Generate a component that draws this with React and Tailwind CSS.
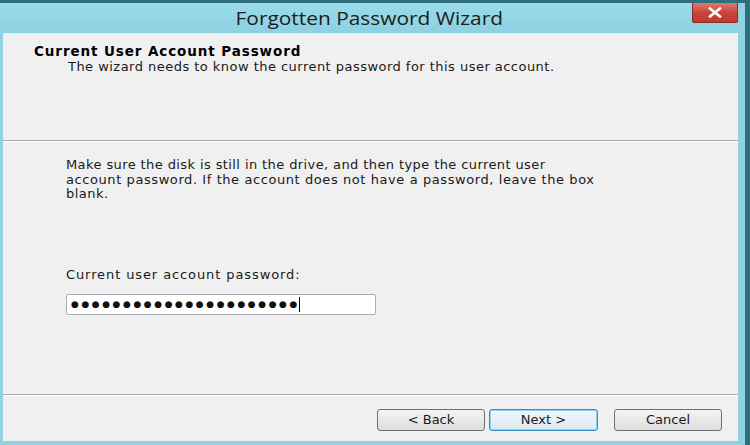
export default function App() {
  const font = { fontFamily: '"DejaVu Sans", Verdana, sans-serif' };
  return (
    <div className="flex h-[445px] w-[750px] flex-col overflow-hidden bg-[#8fd3e3]" style={font}>
      <div className="h-[3px] bg-[#2f6f7b]" />
      <div className="flex flex-1">
        <div className="flex flex-1 flex-col">
          {/* title bar */}
          <div className="relative flex h-[30px] items-center justify-center bg-gradient-to-b from-[#9adbe9] to-[#8cd1e2]">
            <span
              className="inline-block scale-x-[1.16] text-[18px] text-[#1c1c1c]"
              style={{ fontFamily: '"Open Sans", "Noto Sans", sans-serif' }}
            >
              Forgotten Password Wizard
            </span>
            <div className="absolute right-[0px] top-0 flex h-[20px] w-[46px] items-center justify-center rounded-b-[2px] border border-t-0 border-[#8a2b26] bg-gradient-to-b from-[#e07a70] via-[#c9433a] to-[#c23a30]">
              <svg width="14" height="11" viewBox="0 0 14 11">
                <path d="M2 1.5 L12 9.5 M12 1.5 L2 9.5" stroke="#ffffff" strokeWidth="2.6" strokeLinecap="square" />
              </svg>
            </div>
          </div>
          {/* body */}
          <div className="flex flex-1 pl-[3px] pb-[4px]">
            <div className="flex flex-1 flex-col bg-[#f0f0f0]">
              <div className="h-[107px] pl-[31px] pt-[10px]">
                <div className="whitespace-nowrap text-[13.5px] font-bold leading-[16px] tracking-[0.9px] text-black">
                  Current User Account Password
                </div>
                <div className="whitespace-nowrap pl-[34px] text-[13px] leading-[16px] tracking-[0.47px] text-[#1a1a1a]">
                  The wizard needs to know the current password for this user account.
                </div>
              </div>
              <div className="h-[1px] bg-[#a9a9a9]" />
              <div className="h-[1px] bg-white" />
              <div className="flex h-[252px] flex-col pl-[63px] pt-[16px]">
                <div className="whitespace-nowrap text-[13px] leading-[14.5px] text-[#1a1a1a]">
                  <div className="tracking-[0.4px]">Make sure the disk is still in the drive, and then type the current user</div>
                  <div className="tracking-[0.58px]">account password. If the account does not have a password, leave the box</div>
                  <div className="tracking-[0.5px]">blank.</div>
                </div>
                <div className="mt-[65px] whitespace-nowrap text-[13px] leading-[16px] tracking-[0.9px] text-[#1a1a1a]">
                  Current user account password:
                </div>
                <div className="mt-[11px] flex h-[21px] w-[310px] items-center rounded-[2px] border border-[#abadb3] bg-white pl-[4px]">
                  <span className="text-[9px] leading-none tracking-[2.55px] text-[#111]">
                    {"●●●●●●●●●●●●●●●●●●●●●●"}
                  </span>
                  <span className="-ml-[1px] h-[15px] w-[1px] bg-black" />
                </div>
              </div>
              <div className="h-[1px] bg-[#a9a9a9]" />
              <div className="h-[1px] bg-white" />
              <div className="flex flex-1 items-start gap-[4px] pl-[374px] pt-[13px]">
                <button className="h-[22px] w-[108px] rounded-[3px] border border-[#707070] bg-gradient-to-b from-[#f4f4f4] to-[#dddddd] text-[13px] text-[#1a1a1a]">
                  {"< Back"}
                </button>
                <button className="h-[22px] w-[109px] rounded-[3px] border border-[#3c8fc4] bg-gradient-to-b from-[#f0f7fb] to-[#dbe9f2] text-[13px] text-[#1a1a1a] shadow-[inset_0_0_0_1px_#8fd0ee]">
                  {"Next >"}
                </button>
                <button className="ml-[12px] h-[22px] w-[108px] rounded-[3px] border border-[#707070] bg-gradient-to-b from-[#f4f4f4] to-[#dddddd] text-[13px] text-[#1a1a1a]">
                  Cancel
                </button>
              </div>
            </div>
          </div>
        </div>
        <div className="w-[7px] bg-[#8fd3e3]" />
        <div className="w-[5px] bg-[#2f6f7b]" />
      </div>
    </div>
  );
}
